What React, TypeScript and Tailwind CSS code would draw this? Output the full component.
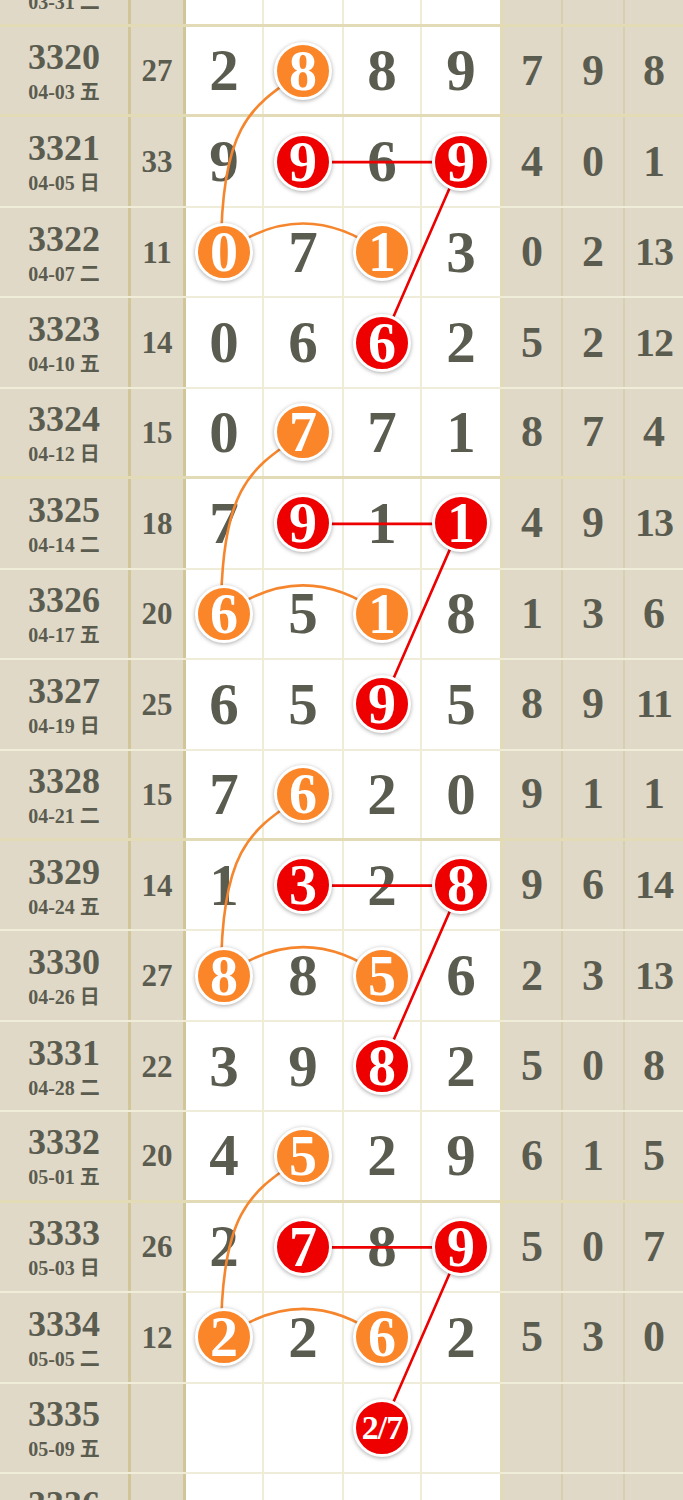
import React from "react";

type Row = { n: string; d: string; w: string; s: string; g: string[]; b: string[] };

const rows: Row[] = [
  { n: "3319", d: "03-31", w: "二", s: "", g: ["", "", "", ""], b: ["", "", ""] },
  { n: "3320", d: "04-03", w: "五", s: "27", g: ["2", "8", "8", "9"], b: ["7", "9", "8"] },
  { n: "3321", d: "04-05", w: "日", s: "33", g: ["9", "9", "6", "9"], b: ["4", "0", "1"] },
  { n: "3322", d: "04-07", w: "二", s: "11", g: ["0", "7", "1", "3"], b: ["0", "2", "13"] },
  { n: "3323", d: "04-10", w: "五", s: "14", g: ["0", "6", "6", "2"], b: ["5", "2", "12"] },
  { n: "3324", d: "04-12", w: "日", s: "15", g: ["0", "7", "7", "1"], b: ["8", "7", "4"] },
  { n: "3325", d: "04-14", w: "二", s: "18", g: ["7", "9", "1", "1"], b: ["4", "9", "13"] },
  { n: "3326", d: "04-17", w: "五", s: "20", g: ["6", "5", "1", "8"], b: ["1", "3", "6"] },
  { n: "3327", d: "04-19", w: "日", s: "25", g: ["6", "5", "9", "5"], b: ["8", "9", "11"] },
  { n: "3328", d: "04-21", w: "二", s: "15", g: ["7", "6", "2", "0"], b: ["9", "1", "1"] },
  { n: "3329", d: "04-24", w: "五", s: "14", g: ["1", "3", "2", "8"], b: ["9", "6", "14"] },
  { n: "3330", d: "04-26", w: "日", s: "27", g: ["8", "8", "5", "6"], b: ["2", "3", "13"] },
  { n: "3331", d: "04-28", w: "二", s: "22", g: ["3", "9", "8", "2"], b: ["5", "0", "8"] },
  { n: "3332", d: "05-01", w: "五", s: "20", g: ["4", "5", "2", "9"], b: ["6", "1", "5"] },
  { n: "3333", d: "05-03", w: "日", s: "26", g: ["2", "7", "8", "9"], b: ["5", "0", "7"] },
  { n: "3334", d: "05-05", w: "二", s: "12", g: ["2", "2", "6", "2"], b: ["5", "3", "0"] },
  { n: "3335", d: "05-09", w: "五", s: "", g: ["", "", "2/7", ""], b: ["", "", ""] },
  { n: "3336", d: "05-12", w: "日", s: "", g: ["", "", "", ""], b: ["", "", ""] },
  { n: "3337", d: "05-14", w: "二", s: "", g: ["", "", "", ""], b: ["", "", ""] },
];

const RH = 90.44;
const isThick = (i: number) => i === 0 || (i - 1) % 4 === 0;
const bw = (i: number) => (isThick(i) ? 3 : 2);
const cy = (i: number) => RH * i + (RH - bw(i)) / 2;

const ballPattern: Record<number, Record<number, "o" | "r">> = {
  0: { 1: "o" },
  1: { 1: "r", 3: "r" },
  2: { 0: "o", 2: "o" },
  3: { 2: "r" },
};

function ballFor(i: number, c: number): "o" | "r" | null {
  if (i < 1 || i > 16) return null;
  const p = ballPattern[(i - 1) % 4];
  return p[c] ?? null;
}

const serif = "font-['Liberation_Serif','Noto_Sans_CJK_SC',serif] font-bold";

function Ball({ v, color }: { v: string; color: "o" | "r" }) {
  const bg = color === "o" ? "bg-[#fb862a]" : "bg-[#ee0000]";
  const small = v.length > 1;
  return (
    <div
      className={`relative z-20 w-[58px] h-[58px] rounded-full border-[3px] border-white ${bg} shadow-[0_1px_4px_rgba(0,0,0,0.35)] flex items-center justify-center text-white leading-none ${
        small ? "text-[34px] tracking-[-1px]" : "text-[56px]"
      }`}
    >
      {v}
    </div>
  );
}

const gridW = ["w-[78px]", "w-[80px]", "w-[78px]", "w-[81px]"];
const beigeW = ["w-[60px]", "w-[62px]", "w-[58px]"];

export default function App() {
  const H = RH * rows.length;
  const paths: { d: string; c: string }[] = [];
  for (let k = 0; k < 4; k++) {
    const a = 1 + 4 * k;
    const y0 = cy(a);
    paths.push({
      d: `M 303 ${y0} C 253 ${y0 + 35} 221 ${y0 + 50} 221 ${cy(a + 2)}`,
      c: "#f5862e",
    });
    paths.push({ d: `M 224 ${cy(a + 2)} Q 303 ${cy(a + 2) - 58} 382 ${cy(a + 2)}`, c: "#f5862e" });
    paths.push({ d: `M 303 ${cy(a + 1)} L 461 ${cy(a + 1)}`, c: "#ee0000" });
    paths.push({ d: `M 461 ${cy(a + 1)} L 382 ${cy(a + 3)}`, c: "#ee0000" });
  }

  return (
    <div className={`w-[683px] h-[1500px] overflow-hidden bg-white text-[#5b5c50] ${serif}`}>
      <div className="relative mt-[-63.44px]">
        {rows.map((r, i) => (
          <div
            key={r.n}
            className={`flex h-[90.44px] ${
              isThick(i) ? "border-b-[3px] border-[#beaf5a73]" : "border-b-2 border-[#beaf5a3d]"
            }`}
          >
            <div className="w-[131px] bg-[#e1d9c8] border-r-[3px] border-[#beaf5a73] flex flex-col items-center justify-center gap-[7px]">
              <div className="text-[36px] leading-none">{r.n}</div>
              <div className="text-[20px] leading-none">
                {r.d} {r.w}
              </div>
            </div>
            <div className="w-[55px] bg-[#e1d9c8] border-r-[3px] border-[#beaf5a73] flex items-center justify-center text-[31px] leading-none">
              {r.s}
            </div>
            {r.g.map((v, c) => {
              const b = ballFor(i, c);
              return (
                <div
                  key={c}
                  className={`${gridW[c]} bg-white flex items-center justify-center ${
                    c === 3 ? "border-r-[3px] border-[#beaf5a73]" : "border-r-2 border-[#beaf5a3d]"
                  }`}
                >
                  {b && v ? <Ball v={v} color={b} /> : <span className="text-[59px] leading-none">{v}</span>}
                </div>
              );
            })}
            {r.b.map((v, c) => (
              <div
                key={c}
                className={`${beigeW[c]} bg-[#e1d9c8] flex items-center justify-center leading-none ${
                  c < 2 ? "border-r-2 border-[#beaf5a3d]" : ""
                } ${v.length > 1 ? "text-[40px] tracking-[-1px]" : "text-[44px]"}`}
              >
                {v}
              </div>
            ))}
          </div>
        ))}
        <svg
          className="absolute left-0 top-0 z-10 pointer-events-none"
          width={683}
          height={H}
        >
          {paths.map((p, idx) => (
            <path key={idx} d={p.d} stroke={p.c} strokeWidth={2.6} fill="none" strokeLinecap="round" />
          ))}
        </svg>
      </div>
    </div>
  );
}
